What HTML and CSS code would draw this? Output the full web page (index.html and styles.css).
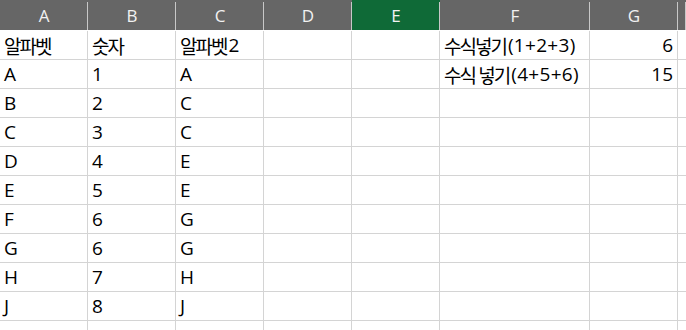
FILE: index.html
```html
<!DOCTYPE html>
<html lang="ko">
<head>
<meta charset="utf-8">
<link rel="stylesheet" href="styles.css">
</head>
<body>
<div class="sheet">
  <div class="colhead">
    <div class="hc">A</div>
    <div class="hc">B</div>
    <div class="hc">C</div>
    <div class="hc">D</div>
    <div class="hc sel">E</div>
    <div class="hc">F</div>
    <div class="hc">G</div>
    <div class="hc"></div>
  </div>
  <div class="grid">
    <div class="c"><span class="ko">알파벳</span></div><div class="c"><span class="ko">숫자</span></div><div class="c"><span class="ko">알파벳</span>2</div><div class="c"></div><div class="c"></div><div class="c"><span class="ko">수식넣기</span><span class="fx">(1+2+3)</span></div><div class="c num">6</div><div class="c"></div>
    <div class="c">A</div><div class="c">1</div><div class="c">A</div><div class="c"></div><div class="c"></div><div class="c"><span class="ko">수식 넣기</span><span class="fx">(4+5+6)</span></div><div class="c num">15</div><div class="c"></div>
    <div class="c">B</div><div class="c">2</div><div class="c">C</div><div class="c"></div><div class="c"></div><div class="c"></div><div class="c"></div><div class="c"></div>
    <div class="c">C</div><div class="c">3</div><div class="c">C</div><div class="c"></div><div class="c"></div><div class="c"></div><div class="c"></div><div class="c"></div>
    <div class="c">D</div><div class="c">4</div><div class="c">E</div><div class="c"></div><div class="c"></div><div class="c"></div><div class="c"></div><div class="c"></div>
    <div class="c">E</div><div class="c">5</div><div class="c">E</div><div class="c"></div><div class="c"></div><div class="c"></div><div class="c"></div><div class="c"></div>
    <div class="c">F</div><div class="c">6</div><div class="c">G</div><div class="c"></div><div class="c"></div><div class="c"></div><div class="c"></div><div class="c"></div>
    <div class="c">G</div><div class="c">6</div><div class="c">G</div><div class="c"></div><div class="c"></div><div class="c"></div><div class="c"></div><div class="c"></div>
    <div class="c">H</div><div class="c">7</div><div class="c">H</div><div class="c"></div><div class="c"></div><div class="c"></div><div class="c"></div><div class="c"></div>
    <div class="c">J</div><div class="c">8</div><div class="c">J</div><div class="c"></div><div class="c"></div><div class="c"></div><div class="c"></div><div class="c"></div>
    <div class="c"></div><div class="c"></div><div class="c"></div><div class="c"></div><div class="c"></div><div class="c"></div><div class="c"></div><div class="c"></div>
  </div>
</div>
</body>
</html>
```
FILE: styles.css
```css
* { box-sizing: border-box; }
html, body {
  margin: 0;
  padding: 0;
  background: #ffffff;
}
.sheet {
  width: 686px;
  height: 330px;
  overflow: hidden;
  font-family: "Open Sans", "Noto Sans CJK KR", sans-serif;
  color: #000;
}
.colhead {
  display: grid;
  grid-template-columns: 88px 88px 88px 88px 88px 150px 88px 1fr;
  height: 30px;
  background: #666666;
}
.hc {
  position: relative;
  display: flex;
  align-items: center;
  justify-content: center;
  color: #f2f2f2;
  font-size: 17px;
}
.hc::after {
  content: "";
  position: absolute;
  right: 0;
  top: 2px;
  bottom: 0;
  width: 1px;
  background: #c8c8c8;
}
.hc.sel {
  background: #0f6a37;
}
.grid {
  display: grid;
  grid-template-columns: 88px 88px 88px 88px 88px 150px 88px 1fr;
  grid-auto-rows: 29px;
  padding-top: 1px;
}
.c {
  border-right: 1px solid #d4d4d4;
  border-bottom: 1px solid #d4d4d4;
  display: flex;
  align-items: center;
  padding: 0 4px;
  font-size: 19px;
  white-space: pre;
  overflow: hidden;
}
.ko {
  font-family: "Noto Sans CJK KR", sans-serif;
  letter-spacing: -2px;
  padding-right: 2px;
}
.fx {
  letter-spacing: 0.3px;
}
.c.num {
  justify-content: flex-end;
}
```
